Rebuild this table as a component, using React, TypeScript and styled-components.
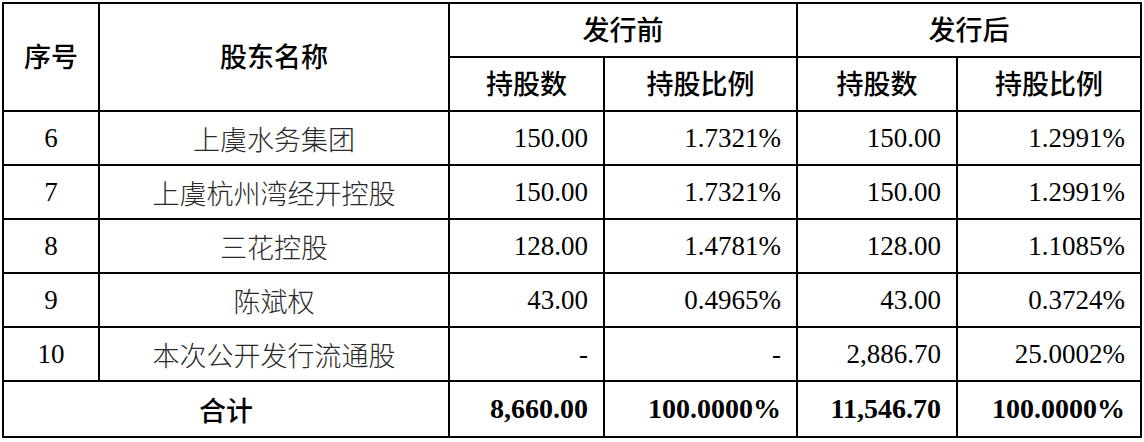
import styled, { createGlobalStyle } from 'styled-components';

const GlobalStyle = createGlobalStyle`
  html, body {
    margin: 0;
    padding: 0;
    background: #ffffff;
  }
  body {
    padding: 2px 0 0 2px;
  }
`;

type Row = {
  no: string;
  name: string;
  beforeShares: string;
  beforeRatio: string;
  afterShares: string;
  afterRatio: string;
};

const rows: Row[] = [
  { no: '6', name: '上虞水务集团', beforeShares: '150.00', beforeRatio: '1.7321%', afterShares: '150.00', afterRatio: '1.2991%' },
  { no: '7', name: '上虞杭州湾经开控股', beforeShares: '150.00', beforeRatio: '1.7321%', afterShares: '150.00', afterRatio: '1.2991%' },
  { no: '8', name: '三花控股', beforeShares: '128.00', beforeRatio: '1.4781%', afterShares: '128.00', afterRatio: '1.1085%' },
  { no: '9', name: '陈斌权', beforeShares: '43.00', beforeRatio: '0.4965%', afterShares: '43.00', afterRatio: '0.3724%' },
  { no: '10', name: '本次公开发行流通股', beforeShares: '-', beforeRatio: '-', afterShares: '2,886.70', afterRatio: '25.0002%' },
];

const Table = styled.table`
  width: 1138px;
  border-collapse: collapse;
  table-layout: fixed;
  color: #000;
`;

const Col = styled.col<{ $w: number }>`
  width: ${({ $w }) => $w}px;
`;

const HeadRow = styled.tr`
  height: 54px;
`;

const BodyRow = styled.tr<{ $h?: number }>`
  height: ${({ $h }) => $h ?? 54}px;
`;

const Th = styled.th`
  border: 2px solid #000;
  padding: 0 0 4px 0;
  text-align: center;
  vertical-align: middle;
  font-family: 'Noto Sans CJK SC', sans-serif;
  font-size: 27px;
  font-weight: 500;
  color: #000;
`;

const Td = styled.td<{ $align?: 'center' | 'right'; $cjk?: boolean; $bold?: boolean }>`
  border: 2px solid #000;
  padding: 0 ${({ $align }) => ($align === 'right' ? '15px' : '0')} 0 0;
  text-align: ${({ $align }) => $align ?? 'center'};
  vertical-align: middle;
  font-family: ${({ $cjk }) =>
    $cjk ? "'Noto Sans CJK SC', sans-serif" : "'Liberation Serif', 'Noto Sans CJK SC', serif"};
  font-size: ${({ $cjk, $bold }) => ($cjk ? '27px' : $bold ? '28px' : '27px')};
  font-weight: ${({ $bold, $cjk }) => ($bold ? ($cjk ? 500 : 700) : $cjk ? 300 : 400)};
  color: ${({ $cjk, $bold }) => ($cjk && !$bold ? '#2a2a2a' : '#000')};
`;

export default function App() {
  return (
    <>
      <GlobalStyle />
      <Table>
        <colgroup>
          <Col $w={96} />
          <Col $w={350} />
          <Col $w={155} />
          <Col $w={193} />
          <Col $w={160} />
          <Col $w={184} />
        </colgroup>
        <thead>
          <HeadRow>
            <Th rowSpan={2}>序号</Th>
            <Th rowSpan={2}>股东名称</Th>
            <Th colSpan={2}>发行前</Th>
            <Th colSpan={2}>发行后</Th>
          </HeadRow>
          <HeadRow>
            <Th>持股数</Th>
            <Th>持股比例</Th>
            <Th>持股数</Th>
            <Th>持股比例</Th>
          </HeadRow>
        </thead>
        <tbody>
          {rows.map((r) => (
            <BodyRow key={r.no}>
              <Td>{r.no}</Td>
              <Td $cjk>{r.name}</Td>
              <Td $align="right">{r.beforeShares}</Td>
              <Td $align="right">{r.beforeRatio}</Td>
              <Td $align="right">{r.afterShares}</Td>
              <Td $align="right">{r.afterRatio}</Td>
            </BodyRow>
          ))}
          <BodyRow $h={56}>
            <Td colSpan={2} $cjk $bold>合计</Td>
            <Td $align="right" $bold>8,660.00</Td>
            <Td $align="right" $bold>100.0000%</Td>
            <Td $align="right" $bold>11,546.70</Td>
            <Td $align="right" $bold>100.0000%</Td>
          </BodyRow>
        </tbody>
      </Table>
    </>
  );
}
